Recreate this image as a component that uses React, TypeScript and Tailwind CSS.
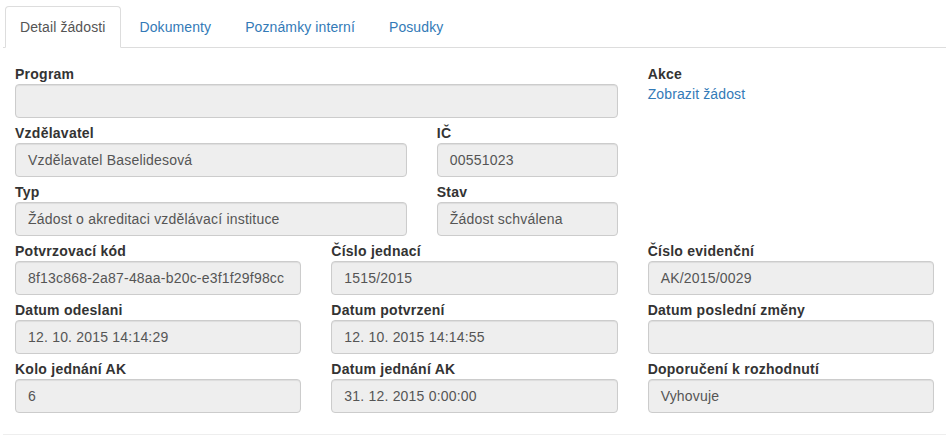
import React from "react";

const TABS = ["Detail žádosti", "Dokumenty", "Poznámky interní", "Posudky"];

type FieldProps = { label: string; value: string; className?: string };

function Field({ label, value, className = "" }: FieldProps) {
  return (
    <div className={`mb-[5px] px-[15px] ${className}`}>
      <label className="block text-sm font-bold leading-5 tracking-[0.25px] text-[#333]">{label}</label>
      <div className="h-[34px] overflow-hidden whitespace-nowrap rounded-[4px] border border-[#ccc] bg-[#eee] px-3 py-1.5 text-sm leading-5 tracking-[0.2px] text-[#555] shadow-[inset_0_1px_1px_rgba(0,0,0,0.075)]">
        {value}
      </div>
    </div>
  );
}

export default function App() {
  return (
    <div className="min-h-screen bg-white text-sm text-[#333]" style={{ fontFamily: '"Liberation Sans", Arial, sans-serif' }}>
      {/* záložky */}
      <ul className="mx-[3px] mt-[6px] flex border-b border-[#ddd] pl-[2px] tracking-[0.1px]">
        {TABS.map((t, i) => (
          <li key={t} className="-mb-px mr-[2px]">
            {i === 0 ? (
              <span className="block rounded-t-[4px] border border-[#ddd] border-b-transparent bg-white py-2.5 pl-[14px] pr-[15px] leading-5 text-[#555]">
                {t}
              </span>
            ) : (
              <a href="#" className="block rounded-t-[4px] border border-transparent px-[15px] py-2.5 leading-5 text-[#337ab7]">
                {t}
              </a>
            )}
          </li>
        ))}
      </ul>

      <div className="pt-4">
        <div className="grid grid-cols-3">
          <div className="col-span-2 px-[15px]">
            <div className="-mx-[15px] grid grid-cols-3">
              <Field className="col-span-3" label="Program" value="" />
              <Field className="col-span-2" label="Vzdělavatel" value="Vzdělavatel Baselidesová" />
              <Field label="IČ" value="00551023" />
              <Field className="col-span-2" label="Typ" value="Žádost o akreditaci vzdělávací instituce" />
              <Field label="Stav" value="Žádost schválena" />
            </div>
          </div>
          <div className="px-[15px]">
            <label className="block text-sm font-bold leading-5 tracking-[0.25px] text-[#333]">Akce</label>
            <a href="#" className="block leading-5 tracking-[0.12px] text-[#337ab7]">
              Zobrazit žádost
            </a>
          </div>
        </div>

        <div className="grid grid-cols-3">
          <Field label="Potvrzovací kód" value="8f13c868-2a87-48aa-b20c-e3f1f29f98cc" />
          <Field label="Číslo jednací" value="1515/2015" />
          <Field label="Číslo evidenční" value="AK/2015/0029" />
          <Field label="Datum odeslani" value="12. 10. 2015 14:14:29" />
          <Field label="Datum potvrzení" value="12. 10. 2015 14:14:55" />
          <Field label="Datum poslední změny" value="" />
          <Field label="Kolo jednání AK" value="6" />
          <Field label="Datum jednání AK" value="31. 12. 2015 0:00:00" />
          <Field label="Doporučení k rozhodnutí" value="Vyhovuje" />
        </div>
      </div>

      <hr className="mx-[3px] mt-4 border-t border-[#eee]" />
    </div>
  );
}
